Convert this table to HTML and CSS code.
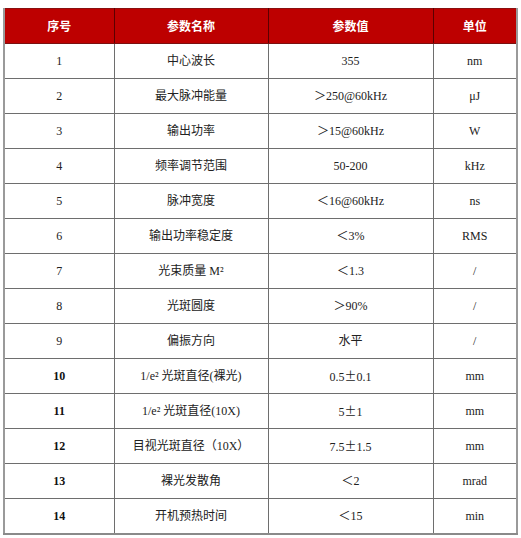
FILE: index.html
```html
<!DOCTYPE html>
<html lang="zh">
<head>
<meta charset="utf-8">
<title>参数表</title>
<link rel="stylesheet" href="styles.css">
</head>
<body>
<table class="spec">
  <colgroup>
    <col class="c1"><col class="c2"><col class="c3"><col class="c4">
  </colgroup>
  <thead>
    <tr><th>序号</th><th>参数名称</th><th>参数值</th><th>单位</th></tr>
  </thead>
  <tbody>
    <tr><td>1</td><td>中心波长</td><td>355</td><td>nm</td></tr>
    <tr><td>2</td><td>最大脉冲能量</td><td>＞250@60kHz</td><td>μJ</td></tr>
    <tr><td>3</td><td>输出功率</td><td>＞15@60kHz</td><td>W</td></tr>
    <tr><td>4</td><td>频率调节范围</td><td>50-200</td><td>kHz</td></tr>
    <tr><td>5</td><td>脉冲宽度</td><td>＜16@60kHz</td><td>ns</td></tr>
    <tr><td>6</td><td>输出功率稳定度</td><td>＜3%</td><td>RMS</td></tr>
    <tr><td>7</td><td>光束质量 M²</td><td>＜1.3</td><td>/</td></tr>
    <tr><td>8</td><td>光斑圆度</td><td>＞90%</td><td>/</td></tr>
    <tr><td>9</td><td>偏振方向</td><td>水平</td><td>/</td></tr>
    <tr class="b"><td>10</td><td>1/e² 光斑直径(裸光)</td><td>0.5<span class="cjk">±</span>0.1</td><td>mm</td></tr>
    <tr class="b"><td>11</td><td>1/e² 光斑直径(10X)</td><td>5<span class="cjk">±</span>1</td><td>mm</td></tr>
    <tr class="b"><td>12</td><td>目视光斑直径（10X）</td><td>7.5<span class="cjk">±</span>1.5</td><td>mm</td></tr>
    <tr class="b"><td>13</td><td>裸光发散角</td><td>＜2</td><td>mrad</td></tr>
    <tr class="b"><td>14</td><td>开机预热时间</td><td>＜15</td><td>min</td></tr>
  </tbody>
</table>
</body>
</html>
```

FILE: styles.css
```css
html, body {
  margin: 0;
  padding: 0;
  background: #ffffff;
}

body {
  padding: 8px 0 0 3px;
}

.spec {
  border-collapse: collapse;
  table-layout: fixed;
  width: 513px;
  font-family: "Liberation Serif", "Noto Sans CJK SC", serif;
  font-size: 12px;
  color: #222;
  border-left: 2px solid #9a9a9a;
  border-right: 2px solid #9a9a9a;
  border-bottom: 2px solid #8a8a8a;
}

.c1 { width: 110px; }
.c2 { width: 154px; }
.c3 { width: 165px; }
.c4 { width: 84px; }

.spec th,
.spec td {
  height: 34px;
  padding: 0;
  text-align: center;
  vertical-align: middle;
  border: 1px solid #6e6e6e;
  line-height: 14px;
}

.spec th {
  background: #bd0000;
  color: #ffffff;
  font-family: "Noto Sans CJK SC", sans-serif;
  font-weight: 700;
  font-size: 12px;
  border-top: 1px solid #8a1010;
  border-bottom: 1px solid #7a1010;
  border-left-color: #5a0000;
  border-right-color: #5a0000;
}

.spec tr.b td:first-child {
  color: #111;
  font-weight: 600;
}

.cjk {
  font-family: "Noto Sans CJK SC", sans-serif;
}
```
